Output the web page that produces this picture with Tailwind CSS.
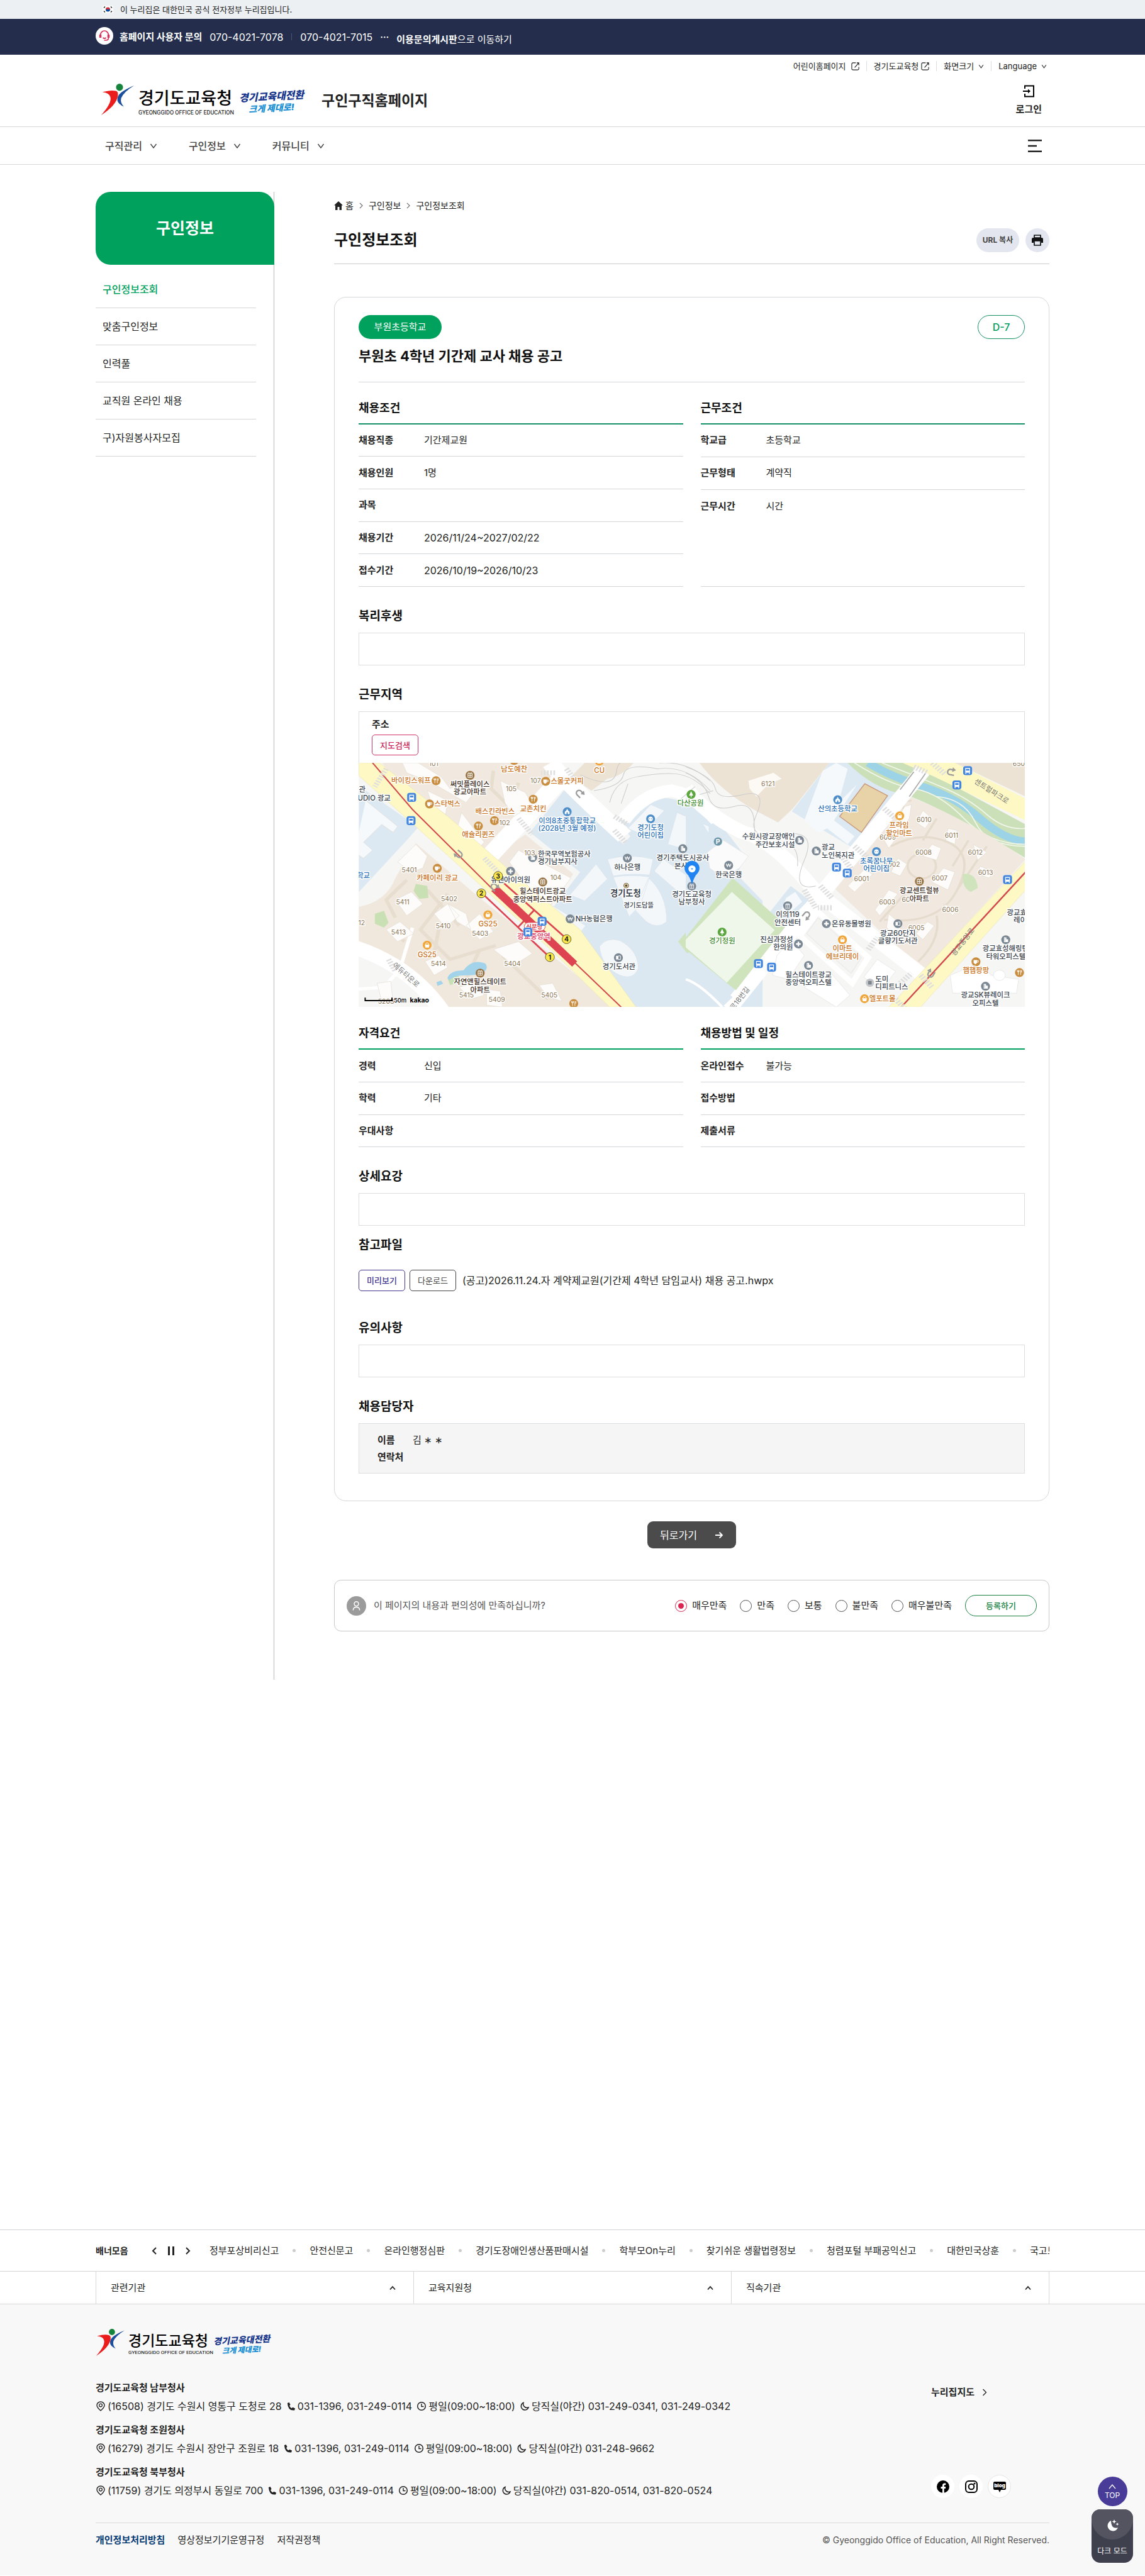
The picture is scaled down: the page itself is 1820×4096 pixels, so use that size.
<!DOCTYPE html>
<html lang="ko">
  <head>
    <meta charset="utf-8" />
    <meta name="viewport" content="width=device-width, initial-scale=1" />
    <title>구인정보조회 - 경기도교육청 구인구직홈페이지</title>
    <!-- Tailwind -->
    <script src="https://cdn.jsdelivr.net/npm/@tailwindcss/browser@4"></script>
  </head>
  <body class="relative bg-white text-[15px] leading-6 text-[#222] font-['Inter','Noto_Sans_CJK_KR',sans-serif]">
    <!-- Shared icons -->
    <svg class="absolute w-0 h-0" aria-hidden="true">
      <symbol id="i-down" viewBox="0 0 12 12"><path d="M1.5 3l4.5 6 4.5-6" fill="none" stroke="currentColor" stroke-width="1.4"/></symbol>
      <symbol id="i-up" viewBox="0 0 12 12"><path d="M2 8.500L6 4l4 4.500" fill="none" stroke="currentColor" stroke-width="1.800"/></symbol>
      <symbol id="i-right" viewBox="0 0 12 12"><path d="M3.500 1l5 5-5 5" fill="none" stroke="currentColor" stroke-width="1.300"/></symbol>
      <symbol id="i-ext" viewBox="0 0 14 14"><path d="M8 1H3Q1 1 1 3v8q0 2 2 2h8q2 0 2-2V8M9.500 1H13v4M12.800 1.200L6 9" fill="none" stroke="currentColor" stroke-width="1.200"/></symbol>
      <symbol id="i-pin" viewBox="0 0 16 16"><path d="M8 15Q2 10 2 6.500a6 5.500 0 0 1 12 0Q14 10 8 15z" fill="none" stroke="currentColor" stroke-width="1.400"/><circle cx="8" cy="6.600" r="2.400" fill="none" stroke="currentColor" stroke-width="1.300"/></symbol>
      <symbol id="i-tel" viewBox="0 0 16 16"><path d="M2 2l3-1 2 4-1.700 1.700q1.200 3 4 4.300L11 9.300l4 2-1 3Q3 16 2 2z" fill="currentColor"/></symbol>
      <symbol id="i-clock" viewBox="0 0 16 16"><circle cx="8" cy="8" r="6.300" fill="none" stroke="currentColor" stroke-width="1.500"/><path d="M8 4v4.500h3.500" fill="none" stroke="currentColor" stroke-width="1.400"/></symbol>
      <symbol id="i-moon" viewBox="0 0 16 16"><path d="M6 2.500A6 6 0 1 0 14 10 6 6 0 0 1 6 2.500z" fill="none" stroke="currentColor" stroke-width="1.500"/></symbol>
      <symbol id="i-symbol" viewBox="0 0 70 52">
        <ellipse cx="35" cy="6" rx="6.500" ry="6" fill="#16853c"/>
        <path d="M3 14q16-4 25-2 5 1 4 8Q29 36 1 52q20-20 17-30-2-7-15-8z" fill="#ea1c1c"/>
        <path d="M62 3Q42 14 38 24q-2 8 5 14-10-4-12-10-1-8 8-14T62 3z" fill="#1d4f9c"/>
      </symbol>
    </svg>

    <!-- Government notice -->
    <div class="h-[30px] bg-[#ecf0f3]">
      <div class="max-w-[1516px] mx-auto h-full flex items-center gap-[11px] pl-[11px] text-[13px]">
        <svg class="w-[17px] h-3" viewBox="0 0 17 12"><path d="M0 0h17v12H0z" fill="#fff"/><path d="M5 6a3.500 3.500 0 0 1 7 0z" fill="#cd2e3a"/><path d="M5 6a3.500 3.500 0 0 0 7 0z" fill="#0047a0"/><path d="M2 3.500l2-2M13 1.500l2 2M2 8.500l2 2M13 10.500l2-2" stroke="#222" stroke-width="1.500"/></svg>
        이 누리집은 대한민국 공식 전자정부 누리집입니다.
      </div>
    </div>

    <!-- Contact bar -->
    <div class="h-[57px] bg-[#242e4c] text-white">
      <div class="max-w-[1516px] mx-auto h-full flex items-center">
        <svg class="w-7 h-7 mr-[10px] mb-1" viewBox="0 0 28 28"><circle cx="14" cy="14" r="14" fill="#fff"/><g fill="none" stroke="#d8325c" stroke-width="1.700"><path d="M7.500 13a6.500 7 0 0 1 13 0v4q0 4-4 4h-3"/><path d="M7.500 12v5M20.500 12v5" stroke-width="3.500"/><path d="M11.500 17q2.500 2 5 0"/></g></svg>
        <strong class="mr-3">홈페이지 사용자 문의</strong>
        <span class="text-base">070-4021-7078</span>
        <span class="w-px h-[11px] bg-[#4b5470] mx-[13px]"></span>
        <span class="text-base">070-4021-7015</span>
        <span class="mx-3 text-sm font-bold">⋯</span>
        <a href="#" class="pt-2"><b>이용문의게시판</b>으로 이동하기</a>
      </div>
    </div>

    <!-- Header -->
    <header>
      <div class="border-b border-[#d8d8d8]">
        <div class="max-w-[1516px] mx-auto h-[114px] flex justify-between">
          <div class="flex items-center pt-7 pl-2">
            <a href="#" class="flex items-center">
              <svg class="w-[60px] h-[50px]" viewBox="0 0 70 52" preserveAspectRatio="none"><use href="#i-symbol"/></svg>
              <span class="pt-3 block text-black">
                <span class="block text-[27px] leading-[30px] font-medium">경기도교육청</span>
                <span class="block text-[9px] leading-[14px] whitespace-nowrap font-['Roboto']">GYEONGGIDO OFFICE OF EDUCATION</span>
              </span>
              <span class="ml-2 pt-2 block text-center italic font-black">
                <span class="block text-base leading-[19px] text-[#17358b] -rotate-3">경기교육대전환</span>
                <span class="block text-[14px] leading-[18px] text-[#1a8fd3] -rotate-3">크게 제대로!</span>
              </span>
            </a>
            <a href="#" class="ml-7 pt-1 text-[23px] font-bold">구인구직홈페이지</a>
          </div>
          <div class="flex flex-col items-end pt-2">
            <ul class="flex items-center h-5 pr-1 text-[13px]">
              <li class="flex items-center gap-2 pr-[11px] border-r border-[#ddd] leading-4"><a href="#">어린이홈페이지</a><svg class="w-[13px] h-[13px]"><use href="#i-ext"/></svg></li>
              <li class="flex items-center gap-1 px-[11px] border-r border-[#ddd] leading-4"><a href="#">경기도교육청</a><svg class="w-[13px] h-[13px]"><use href="#i-ext"/></svg></li>
              <li class="px-[11px] border-r border-[#ddd] leading-4"><button type="button" class="flex items-center gap-[7px]">화면크기<svg class="w-[9px] h-[9px]"><use href="#i-down"/></svg></button></li>
              <li class="pl-[11px] leading-4"><button type="button" class="flex items-center gap-[7px]">Language<svg class="w-[9px] h-[9px]"><use href="#i-down"/></svg></button></li>
            </ul>
            <a href="#" class="mt-5 mr-3 flex flex-col items-center gap-[9px]">
              <svg class="w-5 h-5" viewBox="0 0 20 20" fill="none" stroke="#000" stroke-width="2"><path d="M4 6V1.500h14v17H4V14"/><path d="M1 10h10"/><path d="M9 6.500l4 3.500-4 3.500z" fill="#000" stroke="none"/></svg>
              <span class="font-bold leading-5">로그인</span>
            </a>
          </div>
        </div>
      </div>
      <nav class="border-b border-[#d8d8d8]">
        <div class="max-w-[1516px] mx-auto h-[59px] flex items-center justify-between pl-[15px] pr-3">
          <ul class="flex gap-[50px] text-base font-medium text-[#444]">
            <li><button type="button" class="flex items-center gap-3">구직관리<svg class="w-3 h-3"><use href="#i-down"/></svg></button></li>
            <li><button type="button" class="flex items-center gap-3">구인정보<svg class="w-3 h-3"><use href="#i-down"/></svg></button></li>
            <li><button type="button" class="flex items-center gap-3">커뮤니티<svg class="w-3 h-3"><use href="#i-down"/></svg></button></li>
          </ul>
          <button type="button" aria-label="전체메뉴"><svg class="w-[22px] h-5" viewBox="0 0 22 20"><path d="M0 1.200h22M0 10h14M0 18.800h22" stroke="#222" stroke-width="2.400"/></svg></button>
        </div>
      </nav>
    </header>

    <!-- Content -->
    <div class="max-w-[1516px] mx-auto pt-[43px] flex gap-[95px]">
      <aside class="w-[284px] shrink-0 border-r border-[#bbb]">
        <h2 class="-mr-px h-[116px] flex items-center justify-center rounded-3xl rounded-br-none bg-[#00a15c] text-white text-[25px] font-bold">구인정보</h2>
        <ul class="pt-[10px] mr-7 text-base">
          <li class="h-[59px] flex items-center pl-[11px] border-b border-[#d5d5d5]"><a href="#" class="text-[#00a15c] font-medium">구인정보조회</a></li>
          <li class="h-[59px] flex items-center pl-[11px] border-b border-[#d5d5d5]"><a href="#">맞춤구인정보</a></li>
          <li class="h-[59px] flex items-center pl-[11px] border-b border-[#d5d5d5]"><a href="#">인력풀</a></li>
          <li class="h-[59px] flex items-center pl-[11px] border-b border-[#d5d5d5]"><a href="#">교직원 온라인 채용</a></li>
          <li class="h-[59px] flex items-center pl-[11px] border-b border-[#d5d5d5]"><a href="#">구)자원봉사자모집</a></li>
        </ul>
      </aside>

      <main class="flex-1 min-w-0 pt-[11px] pb-[77px]">
        <div class="flex items-center h-[22px] text-[14px]">
          <svg class="w-[14px] h-[14px] mr-1" viewBox="0 0 14 14"><path d="M7 0l7 6.500h-2V14H8.500V9h-3v5H2V6.500H0z" fill="#222"/></svg>
          <a href="#">홈</a>
          <svg class="w-[10px] h-[10px] mx-[7px] text-[#666]"><use href="#i-right"/></svg>
          <a href="#">구인정보</a>
          <svg class="w-[10px] h-[10px] mx-[7px] text-[#666]"><use href="#i-right"/></svg>
          <a href="#">구인정보조회</a>
        </div>
        <div class="mt-[25px] pb-[18px] flex items-center justify-between border-b border-[#ccc]">
          <h1 class="text-2xl leading-8 font-bold text-[#111]">구인정보조회</h1>
          <div class="flex gap-[10px]">
            <button type="button" class="w-[68px] h-[38px] rounded-full bg-[#e3e6ee] text-[12px] font-bold text-[#444]">URL 복사</button>
            <button type="button" aria-label="인쇄" class="w-[38px] h-[38px] rounded-full bg-[#e3e6ee] flex items-center justify-center"><svg class="w-[18px] h-[18px]" viewBox="0 0 18 18"><path d="M4 1h10v4H4z" fill="none" stroke="#111" stroke-width="1.700"/><path d="M2 5h14q2 0 2 2v6h-3v-3H3v3H0V7q0-2 2-2z" fill="#111"/><path d="M4 10h10v7H4z" fill="#e3e6ee" stroke="#111" stroke-width="1.700"/></svg></button>
          </div>
        </div>

        <article class="mt-[52px] px-[38px] pt-7 pb-[43px] border border-[#d5d8da] rounded-[19px]">
          <div class="flex justify-between">
            <span class="w-[132px] h-[38px] rounded-full bg-[#00a15c] text-white flex items-center justify-center">부원초등학교</span>
            <span class="w-[75px] h-[38px] rounded-full border border-[#15915f] text-[#009d5b] text-base font-medium flex items-center justify-center">D-7</span>
          </div>
          <h2 class="mt-3 pb-[26px] text-[22px] leading-[30px] font-bold text-[#111] border-b border-[#d5d8da]">부원초 4학년 기간제 교사 채용 공고</h2>

          <div class="grid grid-cols-2 gap-7 pt-[27px]">
            <section class="flex flex-col">
              <h3 class="pb-[10px] text-lg leading-7 font-bold text-[#111] border-b-2 border-[#17916a]">채용조건</h3>
              <table class="w-full h-[258px] text-left">
                <tr class="border-b border-[#d3d6d8]"><th class="w-[104px] font-bold">채용직종</th><td>기간제교원</td></tr>
                <tr class="border-b border-[#d3d6d8]"><th class="font-bold">채용인원</th><td>1명</td></tr>
                <tr class="border-b border-[#d3d6d8]"><th class="font-bold">과목</th><td></td></tr>
                <tr class="border-b border-[#d3d6d8]"><th class="font-bold">채용기간</th><td class="text-base">2026/11/24~2027/02/22</td></tr>
                <tr class="border-b border-[#d3d6d8]"><th class="font-bold">접수기간</th><td class="text-base">2026/10/19~2026/10/23</td></tr>
              </table>
            </section>
            <section class="flex flex-col border-b border-[#d3d6d8]">
              <h3 class="pb-[10px] text-lg leading-7 font-bold text-[#111] border-b-2 border-[#17916a]">근무조건</h3>
              <table class="w-full h-[155px] text-left">
                <tr class="border-b border-[#d3d6d8]"><th class="w-[104px] font-bold">학교급</th><td>초등학교</td></tr>
                <tr class="border-b border-[#d3d6d8]"><th class="font-bold">근무형태</th><td>계약직</td></tr>
                <tr><th class="font-bold">근무시간</th><td>시간</td></tr>
              </table>
            </section>
          </div>

          <h3 class="mt-8 mb-[11px] text-[19px] leading-[30px] font-bold text-[#111]">복리후생</h3>
          <div class="h-[52px] border border-[#dcdfe1]"></div>

          <h3 class="mt-8 mb-[11px] text-[19px] leading-[30px] font-bold text-[#111]">근무지역</h3>
          <div class="px-5 pt-2 pb-3 border border-b-0 border-[#dcdfe1]">
            <div class="font-bold">주소</div>
            <button type="button" class="mt-1 w-[74px] h-[33px] block rounded-[5px] border border-[#cc3064] text-[13px] text-[#cc1f58] font-medium">지도검색</button>
          </div>

          <!-- Map -->
          <svg class="block w-full" viewBox="0 0 1118 410" role="img" aria-label="근무지역 지도">
            <defs>
              <g id="m-bus"><rect x="-7.500" y="-7.500" width="15" height="15" rx="4" fill="#4286e0"/><path d="M-4-4.500h8v8h-8z" fill="#fff"/><path d="M-2.800-3h5.600v3h-5.600z" fill="#4286e0"/><path d="M-3 3.500v2M3 3.500v2" stroke="#fff" stroke-width="1.500"/></g>
              <g id="m-food"><circle r="7.500" fill="#c98d3f"/><path d="M-2-4v8M2-4v8M-3.500-4v2.500h3V-4M3.500-4v4" stroke="#fff" fill="none"/></g>
              <g id="m-cup"><circle r="7.500" fill="#c98d3f"/><path d="M-4-3h6v4q-1 3-3 3t-3-3z" fill="#fff"/><path d="M2-2h2v2.500H2" fill="none" stroke="#fff"/></g>
              <g id="m-mart"><circle r="7.500" fill="#f0a63a"/><path d="M-4-1h8l-1 5h-6z" fill="#fff"/><path d="M-2.500-1a2.500 3 0 0 1 5 0" fill="none" stroke="#fff"/></g>
              <g id="m-apt"><circle r="7.500" fill="#987647"/><path d="M-3.500-3.500h7v7h-7zM0-3.500v7M-3.500 0h7M-2-5v2M2-5v2" fill="none" stroke="#fff"/></g>
              <g id="m-bld"><circle r="7.500" fill="#7b8894"/><path d="M-3-4h4v8h-4zM1-1h3v5H1z" fill="#fff"/><path d="M-1.500-2.500v5" stroke="#7b8894" stroke-dasharray="1 1"/></g>
              <g id="m-won"><circle r="7.500" fill="#7b8894"/><path d="M-4-3l2 6 2-6 2 6 2-6M-4.500-.5h9" fill="none" stroke="#fff"/></g>
              <g id="m-gov"><circle r="7.500" fill="#7b8894"/><path d="M-4 4h8M-4-2h8M-3-2v5M0-2v5M3-2v5M-3-3.500h6" stroke="#fff" fill="none"/></g>
              <g id="m-book"><circle r="7.500" fill="#7b8894"/><path d="M-4-3h4v6h-4z" fill="#fff"/><path d="M0-3h3.500v6H0" fill="none" stroke="#fff"/></g>
              <g id="m-med"><circle r="7.500" fill="#7b8894"/><path d="M0-4v8M-4 0h8" stroke="#fff" stroke-width="2.500"/></g>
              <g id="m-sch"><circle r="7.500" fill="#4f8fc9"/><path d="M0-5l1.500 3L4 0v4H1V1h-2v3h-3V0l2.500-2z" fill="#fff"/></g>
              <g id="m-kid"><circle r="7.500" fill="#4f8fc9"/><circle r="3.800" fill="#fff"/><path d="M-1.500 0h.1M1.500 0h.1" stroke="#4f8fc9" stroke-width="1.500" stroke-linecap="round"/></g>
              <g id="m-tree"><circle r="7.500" fill="#5ba63f"/><path d="M0-5.500L3.500 2h-7zM-.7 2h1.400v3h-1.400z" fill="#fff"/></g>
              <g id="m-uturn"><path d="M-5 6V-1a4.500 4.500 0 0 1 9 0v4" fill="none" stroke="#9b9b9b" stroke-width="2.500"/><path d="M0 2h8L4 8z" fill="#9b9b9b"/></g>
            </defs>
            <path d="M0 0h1118v410H0z" fill="#f6f6f5"/>
            <!-- West side -->
            <g transform="matrix(.3827 0 0 .3333 -11 -20)">
              <path d="M130 60H870l20 70L580 545 340 300 180 130z" fill="#f1e9df"/>
              <path d="M960 130L1020 60h215Q1180 130 1120 140L1050 200z" fill="#ece3d5"/>
              <path d="M30 175L290 385 240 450 30 710z" fill="#dce9f2"/>
              <path d="M932 195L1190 470l30-40-50-75q60-115 190-120 120 10 240 110l120 180-30 100 110 130V1290H1245L860 820l140-210L780 410z" fill="#dce8f1"/>
              <path d="M280 465L560 740l600 550H410Q300 1080 30 965V785Q150 760 190 640z" fill="#f1e8dd"/>
              <path d="M760 420L970 620 860 800 580 560z" fill="#f1e9df"/>
              <path d="M1160 1290L900 1030 1150 1230z" fill="#eee"/>
              <!-- Park footpaths -->
              <g fill="none" stroke="#ccc" stroke-width="3"><path d="M1000 120q150 80 160-20t190-40q120-10 220 90M1060 200q120-20 130-80t150-30q130-20 230 110M1130 260q20-110 120-130t170-15q80 10 150 100M1180 265l30-100"/></g>
              <!-- Cross streets -->
              <g fill="none" stroke="#fff"><path d="M1195 430Q930 150 870 60" stroke-width="78"/><path d="M925 130L570 570" stroke-width="82"/><path d="M1190 350Q1280 210 1400 200q100 20 200 150" stroke-width="62"/><path d="M0 985Q260 1080 400 1320" stroke-width="72"/><path d="M265 890l-55 210-70 90-120 10" stroke-width="16"/></g>
              <g fill="none" stroke="#e8decf" stroke-width="16"><path d="M240 650l-90 100 40 90M420 720L300 900l130 150 200-70M170 900l60 60M330 700l140 180M560 1000L480 1200M380 900l-20 120M660 1030L860 1250M620 100l-10 90 80 90 40-120"/></g>
              <!-- Greens and pond -->
              <path d="M280 670l50 10 5 60-40 5-25-40zM100 820l40-15 20 60-20 25-40-20zM420 1150l40-30 20 40-50 20z" fill="#c9dfb4"/>
              <path d="M418 1145q10-40 70-40 40-60 95-35 20 20-10 50-30 10-70 10-60 0-75 25zM370 1165l20-8 10 15-25 12z" fill="#a3d3ea"/>
              <!-- Buildings -->
              <g fill="#fdfcfa" stroke="#e2dbd2" stroke-width="2">
                <path d="M220 60l70 0 100 70 40 60 80-50 60 20-70 100-150-100-110-50zM480 310l100 150-40 45-80-110zM650 150l110 60 30 60-80 60-40-70zM330 200l90 50-10 70-60-50z"/>
                <path d="M200 560l80-90 50 60-20 60-50 20zM190 750l70-40 50 60-70 60zM360 820l60-50 50 60-60 60zM150 900l60-40 60 60-70 40zM500 880l60-60 60 90-60 40zM420 770l80 50 20 80-60-40zM320 1060l60-30 40 60-60 40zM620 1000l110-40 60 60-80 60zM820 1180l60-10 40 90-60-20zM470 1190l60-20 50 60-60 20zM590 1200l60 10 10 80-70-10zM110 1170l60-10 10 110-50-10z"/>
                <path d="M690 560l40-60 230 140-100 150-70-70z"/>
                <path d="M60 250l140 130-20 30-50-40-80 90 40 40-40 40-40-30" fill="#f5f9fc"/>
              </g>
              <g fill="#f3f7fa" stroke="#d6e2ea" stroke-width="2"><path d="M1120 545q100-30 200 0l-15 80q-80-10-160 5zM1145 635q80-15 160 0l-40 140 -50 60zM1300 640q80 80 80 220-40 40-90 0L1240 800zM1070 570l50 75-100 110-65-30zM1085 985q30-50 90-30 80 50 80 140-20 60-80 35-80-40-90-145zM1425 310l140 70v60l-60 70-120-40zM1310 270l60 30-100 120-60-30zM880 780l145 100-50 70-125-100z"/><path d="M1365 545l200 160-40 100-200-200z"/></g>
              <path d="M1660 640L1430 960l40 60 200-230z" fill="#cfe3bd"/>
              <!-- Main road -->
              <path d="M30 60h90L420 330l280 280 300 290 245 390h-115L880 1010 500 610 250 350 30 125z" fill="#fdf8c4" stroke="#ece5b5" stroke-width="2"/>
              <path d="M90 60L265 295 620 700l360 370 200 220" fill="none" stroke="#d3484f" stroke-width="6"/>
              <path d="M610 705l32-22 345 377-22 26z" fill="#dd4350"/>
              <path d="M575 722L860 1032M655 655L935 940M800 800l-70 85" fill="none" stroke="#dd4350" stroke-width="8"/>
              <g stroke="#dedede" stroke-width="24" stroke-dasharray="7 7" fill="none"><path d="M580 540l60 70M730 340l60 80M890 110l-60 0M940 90l40 60M150 90l-50 90M1150 330l60 40M1150 400l50 60M160 1050l30 60"/></g>
            </g>
            <!-- East side -->
            <g transform="matrix(.3827 0 0 .3333 549 -20)">
              <path d="M150 60H630L470 290l-65 70-100-60Q150 200 60 60z" fill="#ece3d5"/>
              <path d="M275 150l110-40 35 30-60 30-50 60-30-40z" fill="#fdfaf5"/>
              <path d="M630 60h90l240 140-225 290-270-185z" fill="#dce9f2"/>
              <path d="M600 100l60-40 50 30-40 170 80-90-100 180 90 80-30 40-90-80-40 20-60-60z" fill="#f5f9fc"/>
              <path d="M785 165l100 60-115 185-95-80z" fill="#e8d3a8" stroke="#c8977a" stroke-width="4"/>
              <path d="M710 60h280l500 310v170Q1100 270 960 220 820 190 710 60z" fill="#cbe0b8"/>
              <path d="M800 60Q900 130 1040 180t250 160 200 115" fill="none" stroke="#9dd3e6" stroke-width="38"/>
              <g fill="none" stroke="#f2f7ec" stroke-width="5"><path d="M740 60q150 110 260 130t220 150 270 130M860 60q180 80 280 130t180 130 170 70M1100 230q120 10 170 130t220 120"/></g>
              <path d="M950 60H1180L1490 240V350L1090 130z" fill="#fdf8c4"/>
              <path d="M1180 60h310v170z" fill="#ece3d5"/>
              <path d="M970 225Q1230 340 1490 545L1040 1110 655 695z" fill="#f1e9df"/>
              <g fill="none" stroke="#e6dccd" stroke-width="10"><circle cx="1035" cy="580" r="62"/><path d="M900 480q130-80 250-20t40 240-320 150M1100 340l-60 110M1240 450l-70 130M1320 480L1190 700M1100 830q20 120-80 230M960 720l-110 140M990 250q-60 0-20 80"/></g>
              <path d="M1215 620q60-10 65 70l-30 20q-40-20-35-90z" fill="#cfe3bd"/>
              <g fill="#fdfcfa" stroke="#e0d8cd" stroke-width="2"><path d="M1040 300l40 40-30 50-40-30zM1150 390l40 10-10 70-40-20zM1080 470l40 20-20 60-60-20zM1260 470l60 40-40 40zM1290 580l60 30-20 30-50-20zM1130 590l50 20-30 90-70-40zM930 540l40 30-30 60-40-20zM780 600l40 20-80 90-30-30zM890 700l40 20-80 110-20-30zM1130 770l60 30-20 30zM1060 860l30 20-50 70-30-30zM890 820l60 60-30 50-40-40zM960 280l30-10-10 70-50 90-40 60-20-40z"/></g>
              <!-- Secondary streets -->
              <g fill="none" stroke="#fff"><path d="M0 190Q100 330 250 410q130 30 320 300l480 430" stroke-width="68"/><path d="M1040 100L580 740 190 1300" stroke-width="70"/></g>
              <path d="M500 930l80-120 220 230-70 130z" fill="none" stroke="#fff" stroke-width="26"/>
              <path d="M530 920l50-80 190 200-45 80z" fill="#f4f4f3" stroke="#ddd" stroke-width="2"/>
              <g fill="none" stroke="#ccc" stroke-width="3"><path d="M0 80q120 50 130 110t120 30 60 100 110 100 100 130 50 130M0 110q80 40 100 120t110 50 90 90 100 100 90 110M40 180l-60 60M60 220l60-20"/></g>
              <path d="M0 230l110 200-40 100 140 130L0 950z" fill="#dce8f1"/>
              <path d="M460 680l80 70-110 130-60-70z" fill="#dce8f1"/>
              <path d="M440 740l40-30 30 50-60 60-30-20z" fill="#f5f9fc"/>
              <path d="M205 640l235 240-220 325-45-40L0 1000V940z" fill="#cfe3bd"/>
              <path d="M202 710l188 192-210 265L0 990v-40z" fill="#eff7ea"/>
              <path d="M0 1020l205 220-45 50H0z" fill="#dce8f1"/>
              <path d="M0 1150q60 20 160 140" fill="none" stroke="#fff" stroke-width="12"/>
              <path d="M95 510l70-60 110 80-40 60-70 50-60-50z" fill="#fbfbfb" stroke="#e3e3e3" stroke-width="2"/>
              <path d="M1490 555V700L1030 1290H890z" fill="#fdf8c4" stroke="#ece5b5" stroke-width="2"/>
              <path d="M1490 610L945 1290" stroke="#d3484f" stroke-width="7"/>
              <g fill="#fff" stroke="#e0e0e0" stroke-width="2"><path d="M1160 1130l120-60 60 60 120 20-10 70h-280zM400 1030l60-80 60 80-70 120-70-20zM520 1190l110-80 90 120-60 60zM840 1050l80 60-60 90-80-60z"/><circle cx="1375" cy="1130" r="26"/></g>
              <g stroke="#dedede" stroke-width="26" stroke-dasharray="7 7" fill="none"><path d="M740 480l60 60M870 290l50 50M520 700l50 90M590 680l50 60M640 790l-60 0M690 540l40 60M1000 80l60 30M1080 60l60 60M800 1000l40-60M920 1250l50 60M1030 1130l50 60M940 1170l50-50"/></g>
              <g stroke="#aaa" stroke-width="5"><path d="M940 195L1000 105M980 230l70-115"/></g>
            </g>
            <g>
              <use href="#m-bus" x="89" y="58"/><use href="#m-bus" x="88" y="97"/><use href="#m-bus" x="1022" y="13"/><use href="#m-bus" x="1004" y="37"/><use href="#m-bus" x="802" y="175"/><use href="#m-bus" x="820" y="185"/><use href="#m-bus" x="1089" y="196"/><use href="#m-bus" x="671" y="337"/><use href="#m-bus" x="693" y="343"/>
              <use href="#m-food" x="130" y="30"/><use href="#m-food" x="261" y="-4"/><use href="#m-food" x="201" y="106"/><use href="#m-food" x="228" y="97"/><use href="#m-food" x="293" y="61"/><use href="#m-food" x="361" y="404"/><use href="#m-food" x="1109" y="352"/>
              <use href="#m-cup" x="314" y="31"/><use href="#m-cup" x="119" y="69"/><use href="#m-cup" x="132" y="177"/><use href="#m-cup" x="1036" y="334"/>
              <use href="#m-mart" x="404" y="-3"/><use href="#m-mart" x="217" y="255"/><use href="#m-mart" x="115" y="306"/><use href="#m-mart" x="908" y="89"/><use href="#m-mart" x="812" y="297"/><use href="#m-mart" x="849" y="396"/>
              <use href="#m-apt" x="187" y="21"/><use href="#m-apt" x="309" y="200"/><use href="#m-apt" x="204" y="353"/><use href="#m-apt" x="941" y="199"/>
              <use href="#m-bld" x="292" y="159"/><use href="#m-bld" x="544" y="144"/><use href="#m-bld" x="740" y="130"/><use href="#m-bld" x="768" y="148"/><use href="#m-bld" x="1086" y="297"/><use href="#m-bld" x="755" y="340"/><use href="#m-bld" x="1052" y="375"/>
              <use href="#m-won" x="451" y="160"/><use href="#m-won" x="355" y="262"/><use href="#m-won" x="621" y="172"/>
              <use href="#m-gov" x="559" y="207"/><use href="#m-gov" x="720" y="240"/>
              <use href="#m-book" x="436" y="327"/><use href="#m-book" x="905" y="270"/>
              <use href="#m-med" x="255" y="182"/><use href="#m-med" x="785" y="270"/><use href="#m-med" x="738" y="304"/>
              <use href="#m-sch" x="350" y="82"/><use href="#m-sch" x="804" y="62"/><use href="#m-kid" x="490" y="94"/><use href="#m-kid" x="869" y="149"/>
              <use href="#m-tree" x="558" y="53"/><use href="#m-tree" x="610" y="284"/>
              <use href="#m-uturn" transform="translate(371 51) rotate(-45)"/><use href="#m-uturn" transform="translate(168 154) rotate(130)"/><use href="#m-uturn" transform="translate(228 208) rotate(-45)"/><use href="#m-uturn" transform="translate(994 15) rotate(-80)"/><use href="#m-uturn" transform="translate(752 256) rotate(40)"/><use href="#m-uturn" transform="translate(960 354) rotate(210)"/>
              <circle cx="603" cy="132" r="7" fill="#6c95a8"/><circle cx="858" cy="369" r="7" fill="#c3c7cb"/><path d="M855 366h6v6h-6z" fill="#7d848b"/>
              <circle cx="449" cy="206" r="4" fill="#f9e9c0" stroke="#5c4a2d"/><circle cx="449" cy="206" r="2" fill="#5c4a2d"/>
            </g>
            <g fill="#8a7350" class="text-[11px]" text-anchor="middle" stroke="#fff" stroke-width="3" stroke-linejoin="round" paint-order="stroke">
              <text x="297" y="34">107</text><text x="256" y="47">105</text><text x="245" y="104">102</text><text x="287" y="155">103</text><text x="331" y="196">104</text><text x="85" y="184">5401</text><text x="74" y="238">5411</text><text x="152" y="232">5402</text><text x="142" y="278">5410</text><text x="67" y="288">5413</text><text x="204" y="290">5403</text><text x="5" y="272">12</text><text x="134" y="341">5414</text><text x="258" y="341">5404</text><text x="181" y="394">5415</text><text x="232" y="401">5409</text><text x="320" y="394">5405</text>
              <text x="687" y="39">6121</text><text x="949" y="99">6010</text><text x="995" y="126">6011</text><text x="888" y="129">6009</text><text x="948" y="154">6008</text><text x="1035" y="154">6012</text><text x="1052" y="188">6013</text><text x="975" y="197">6007</text><text x="844" y="199">6001</text><text x="895" y="174">6002</text><text x="887" y="238">6003</text><text x="993" y="250">6006</text><text x="936" y="281">6005</text><text x="922" y="233">600</text><text x="1108" y="5">650</text><text x="46" y="404">5203</text><text x="126" y="5">101</text>
            </g>
            <g class="text-[12px] font-medium" text-anchor="middle" stroke="#fff" stroke-width="3" stroke-linejoin="round" paint-order="stroke">
              <g fill="#c9721c">
                <text x="88" y="34">바이킹스워프</text><text x="261" y="15">남도예찬</text><text x="350" y="35">스몰굿커피</text><text x="404" y="17">CU</text><text x="293" y="81">교촌치킨</text><text x="229" y="85">배스킨라빈스</text><text x="149" y="73">스타벅스</text><text x="201" y="125">애슐리퀸즈</text><text x="132" y="197">카페이리 광교</text><text x="217" y="274">GS25</text><text x="115" y="326">GS25</text><text x="907" y="109">프라임</text><text x="907" y="122">할인마트</text><text x="812" y="316">이마트</text><text x="812" y="329">에브리데이</text><text x="1036" y="353">햄햄팡팡</text><text x="879" y="400">엘포트몰</text>
              </g>
              <g fill="#3b2a20"><text x="187" y="40">써밋플레이스</text><text x="187" y="53">광교아파트</text><text x="309" y="220">힐스테이트광교</text><text x="309" y="233">중앙역퍼스트아파트</text><text x="204" y="372">자연앤힐스테이트</text><text x="204" y="385">아파트</text><text x="941" y="219">광교센트럴뷰</text><text x="941" y="232">아파트</text></g>
              <g fill="#2a6fb5"><text x="350" y="101">이의8초중통합학교</text><text x="350" y="114">(2028년 3월 예정)</text><text x="490" y="113">경기도청</text><text x="490" y="126">어린이집</text><text x="8" y="193">학교</text><text x="804" y="81">산의초등학교</text><text x="869" y="169">초록꿈나무</text><text x="869" y="182">어린이집</text></g>
              <g fill="#3f8a2c"><text x="557" y="72">다산공원</text><text x="610" y="303">경기정원</text></g>
              <g fill="#39434e">
                <text x="6" y="49">관</text><text x="26" y="63">UDIO 광교</text><text x="451" y="179">하나은행</text><text x="544" y="164">경기주택도시공사</text><text x="541" y="177">본사</text><text x="559" y="225">경기도교육청</text><text x="559" y="238">남부청사</text><text x="470" y="243" class="text-[11px]">경기도담뜰</text><text x="255" y="201">유앤아이의원</text><text x="395" y="266">NH농협은행</text><text x="437" y="346">경기도서관</text><text x="621" y="192">한국은행</text><text x="720" y="259">이의119</text><text x="720" y="272">안전센터</text><text x="827" y="274">온유동물병원</text><text x="905" y="290">광교60단지</text><text x="905" y="303">글향기도서관</text><text x="755" y="360">힐스테이트광교</text><text x="755" y="373">중앙역오피스텔</text><text x="1052" y="394">광교SK뷰레이크</text><text x="1052" y="407">오피스텔</text>
                <text x="448" y="224" class="text-[14px] font-bold">경기도청</text>
                <g text-anchor="start"><text x="301" y="157">한국무역보험공사</text><text x="301" y="170">경기남부지사</text><text x="777" y="146">광교</text><text x="777" y="159">노인복지관</text><text x="1088" y="255">광교효성</text><text x="1099" y="268">레이크</text><text x="1047" y="316">광교효성해링턴</text><text x="1053" y="329">타워오피스텔</text><text x="867" y="367">도미</text><text x="867" y="380">디피트니스</text></g>
                <g text-anchor="end"><text x="732" y="128">수원시광교장애인</text><text x="732" y="141">주간보호시설</text><text x="729" y="301">진심과정성</text><text x="729" y="314">한의원</text></g>
              </g>
            </g>
            <g class="text-[12px]" text-anchor="middle" fill="#777"><text transform="translate(77 359) rotate(42)">에듀타운로</text><text transform="translate(1060 51) rotate(33)">센트럴파크로</text><text transform="translate(1017 303) rotate(-52)">광교중앙로</text><text transform="translate(643 398) rotate(-52)">로18번길</text></g>
            <text x="603" y="136" text-anchor="middle" fill="#fff" class="text-[11px] font-bold">P</text>
            <!-- Station -->
            <g text-anchor="middle" class="text-[11px] font-bold">
              <rect x="278" y="268" width="35" height="14" rx="7" fill="#fff" stroke="#dd4350"/><text x="295" y="279" fill="#dd4350" class="text-[10px]">신분당</text>
              <text x="294" y="296" fill="#e05577" stroke="#fff" stroke-width="3" paint-order="stroke" class="text-[12px]">광교중앙역</text>
              <use href="#m-bus" x="308" y="266"/><use href="#m-bus" x="284" y="284"/>
              <g fill="#fbe94b" stroke="#5d5420"><circle cx="234" cy="190" r="7.500"/><circle cx="206" cy="219" r="7.500"/><circle cx="349" cy="296" r="7.500"/><circle cx="321" cy="326" r="7.500"/></g>
              <g fill="#222"><text x="234" y="194">3</text><text x="206" y="223">2</text><text x="349" y="300">4</text><text x="321" y="330">1</text></g>
            </g>
            <path d="M559.500 205Q557 192 550 185a12.500 12.500 0 1 1 19 0q-7 7-9.500 20z" fill="#1f83f2"/><circle cx="559.500" cy="178" r="6" fill="#fff"/><path d="M557.500 177h4l-2 2.500z" fill="#1f83f2"/>
            <path d="M11 394v5h45v-5" fill="none" stroke="#000" stroke-width="2"/>
            <g fill="#000"><text x="59" y="402" class="text-[10px] font-medium">50m</text><text x="86" y="402" class="text-[11px] font-bold">kakao</text></g>
          </svg>

          <div class="grid grid-cols-2 gap-7 pt-7">
            <section>
              <h3 class="pb-[10px] text-lg leading-7 font-bold text-[#111] border-b-2 border-[#00a160]">자격요건</h3>
              <table class="w-full h-[155px] text-left">
                <tr class="border-b border-[#d3d6d8]"><th class="w-[104px] font-bold">경력</th><td>신입</td></tr>
                <tr class="border-b border-[#d3d6d8]"><th class="font-bold">학력</th><td>기타</td></tr>
                <tr class="border-b border-[#d3d6d8]"><th class="font-bold">우대사항</th><td></td></tr>
              </table>
            </section>
            <section>
              <h3 class="pb-[10px] text-lg leading-7 font-bold text-[#111] border-b-2 border-[#00a160]">채용방법 및 일정</h3>
              <table class="w-full h-[155px] text-left">
                <tr class="border-b border-[#d3d6d8]"><th class="w-[104px] font-bold">온라인접수</th><td>불가능</td></tr>
                <tr class="border-b border-[#d3d6d8]"><th class="font-bold">접수방법</th><td></td></tr>
                <tr class="border-b border-[#d3d6d8]"><th class="font-bold">제출서류</th><td></td></tr>
              </table>
            </section>
          </div>

          <h3 class="mt-8 mb-[11px] text-[19px] leading-[30px] font-bold text-[#111]">상세요강</h3>
          <div class="h-[52px] border border-[#dcdfe1]"></div>

          <h3 class="mt-4 text-[19px] leading-[30px] font-bold text-[#111]">참고파일</h3>
          <div class="mt-6 flex items-center">
            <button type="button" class="w-[74px] h-[34px] rounded-[5px] border border-[#3f358c] text-[13px] text-[#3f358c] font-medium">미리보기</button>
            <button type="button" class="ml-[7px] w-[74px] h-[34px] rounded-[5px] border border-[#444] text-[13px] text-[#444]">다운로드</button>
            <span class="ml-[10px] text-base">(공고)2026.11.24.자 계약제교원(기간제 4학년 담임교사) 채용 공고.hwpx</span>
          </div>

          <h3 class="mt-11 mb-[11px] text-[19px] leading-[30px] font-bold text-[#111]">유의사항</h3>
          <div class="h-[52px] border border-[#dcdfe1]"></div>

          <h3 class="mt-8 mb-[11px] text-[19px] leading-[30px] font-bold text-[#111]">채용담당자</h3>
          <dl class="grid grid-cols-[56px_1fr] px-[29px] py-3 border border-[#dcdfe1] bg-[#f5f5f5] leading-[27px]">
            <dt class="font-bold">이름</dt><dd>김 ∗ ∗</dd>
            <dt class="font-bold">연락처</dt><dd></dd>
          </dl>
        </article>

        <a href="#" class="mt-8 mx-auto w-[141px] h-[43px] px-5 flex items-center justify-between rounded-[9px] bg-[#4b4b4b] text-white text-base">뒤로가기<svg class="w-[14px] h-[14px]" viewBox="0 0 14 14"><path d="M1 7h11M7.500 2.500L12 7l-4.500 4.500" fill="none" stroke="#fff" stroke-width="1.800"/></svg></a>

        <!-- Satisfaction survey -->
        <form class="mt-[50px] h-[82px] px-[19px] flex items-center justify-between rounded-[11px] border border-[#c8c8c8]">
          <div class="flex items-center gap-3 text-[#555]">
            <svg class="w-[31px] h-[31px]" viewBox="0 0 33 33"><circle cx="16.500" cy="16.500" r="16.500" fill="#9b9b9b"/><circle cx="16.500" cy="13" r="3.700" fill="none" stroke="#fff" stroke-width="1.600"/><path d="M11 24q0-5.500 5.500-5.500T22 24" fill="none" stroke="#fff" stroke-width="1.600"/></svg>
            이 페이지의 내용과 편의성에 만족하십니까?
          </div>
          <div class="flex items-center gap-[21px]">
            <label class="flex items-center gap-2"><input type="radio" name="sat" checked class="appearance-none w-[19px] h-[19px] rounded-full border border-[#555] checked:border-[#dc2450] checked:bg-[#dc2450] checked:bg-clip-content checked:p-1" />매우만족</label>
            <label class="flex items-center gap-2"><input type="radio" name="sat" class="appearance-none w-[19px] h-[19px] rounded-full border border-[#555]" />만족</label>
            <label class="flex items-center gap-2"><input type="radio" name="sat" class="appearance-none w-[19px] h-[19px] rounded-full border border-[#555]" />보통</label>
            <label class="flex items-center gap-2"><input type="radio" name="sat" class="appearance-none w-[19px] h-[19px] rounded-full border border-[#555]" />불만족</label>
            <label class="flex items-center gap-2"><input type="radio" name="sat" class="appearance-none w-[19px] h-[19px] rounded-full border border-[#555]" />매우불만족</label>
            <button type="submit" class="w-[114px] h-[34px] rounded-full border border-[#17803f] text-[13px] text-[#17803f] font-medium">등록하기</button>
          </div>
        </form>
      </main>
    </div>

    <!-- Footer -->
    <footer class="mt-[874px]">
      <div class="border-t border-[#d0d3d8]">
        <div class="max-w-[1516px] mx-auto h-[65px] flex items-center overflow-hidden whitespace-nowrap">
          <strong class="text-[14px] w-[88px] shrink-0">배너모음</strong>
          <div class="flex items-center gap-4 w-[93px] shrink-0">
            <button type="button" aria-label="이전"><svg class="block w-[10px] h-3" viewBox="0 0 10 12"><path d="M8 1L3 6l5 5" fill="none" stroke="#222" stroke-width="2"/></svg></button>
            <button type="button" aria-label="정지"><svg class="block w-3 h-[14px]" viewBox="0 0 12 14"><path d="M2.500 0v14M9.500 0v14" stroke="#222" stroke-width="3"/></svg></button>
            <button type="button" aria-label="다음"><svg class="block w-[10px] h-3" viewBox="0 0 10 12"><path d="M2 1l5 5-5 5" fill="none" stroke="#222" stroke-width="2"/></svg></button>
          </div>
          <ul class="flex items-center gap-[22px] min-w-0 overflow-hidden">
            <li><a href="#">정부포상비리신고</a></li><li class="w-[5px] h-[5px] rounded-full bg-[#ccc] shrink-0"></li>
            <li><a href="#">안전신문고</a></li><li class="w-[5px] h-[5px] rounded-full bg-[#ccc] shrink-0"></li>
            <li><a href="#">온라인행정심판</a></li><li class="w-[5px] h-[5px] rounded-full bg-[#ccc] shrink-0"></li>
            <li><a href="#">경기도장애인생산품판매시설</a></li><li class="w-[5px] h-[5px] rounded-full bg-[#ccc] shrink-0"></li>
            <li><a href="#">학부모On누리</a></li><li class="w-[5px] h-[5px] rounded-full bg-[#ccc] shrink-0"></li>
            <li><a href="#">찾기쉬운 생활법령정보</a></li><li class="w-[5px] h-[5px] rounded-full bg-[#ccc] shrink-0"></li>
            <li><a href="#">청렴포털 부패공익신고</a></li><li class="w-[5px] h-[5px] rounded-full bg-[#ccc] shrink-0"></li>
            <li><a href="#">대한민국상훈</a></li><li class="w-[5px] h-[5px] rounded-full bg-[#ccc] shrink-0"></li>
            <li><a href="#">국고보조금</a></li>
          </ul>
        </div>
      </div>
      <div class="border-y border-[#d8d8d8]">
        <div class="max-w-[1516px] mx-auto h-[51px] grid grid-cols-3 border-l border-[#d8d8d8]">
          <button type="button" class="px-[23px] flex items-center justify-between border-r border-[#d8d8d8]">관련기관<svg class="w-3 h-3 mr-1"><use href="#i-up"/></svg></button>
          <button type="button" class="px-[23px] flex items-center justify-between border-r border-[#d8d8d8]">교육지원청<svg class="w-3 h-3 mr-1"><use href="#i-up"/></svg></button>
          <button type="button" class="px-[23px] flex items-center justify-between border-r border-[#d8d8d8]">직속기관<svg class="w-3 h-3 mr-1"><use href="#i-up"/></svg></button>
        </div>
      </div>
      <div class="bg-[#f8f8f8]">
        <div class="max-w-[1516px] mx-auto pt-[39px] pb-11">
          <a href="#" class="h-[42px] flex items-center">
            <svg class="w-[52px] h-[43px]" viewBox="0 0 70 52" preserveAspectRatio="none"><use href="#i-symbol"/></svg>
            <span class="pt-2 block text-black">
              <span class="block text-[23px] leading-[26px] font-medium">경기도교육청</span>
              <span class="block text-[8px] leading-3 whitespace-nowrap font-['Roboto']">GYEONGGIDO OFFICE OF EDUCATION</span>
            </span>
            <span class="pt-2 block text-center italic font-black">
              <span class="block text-[14px] leading-[17px] text-[#17358b] -rotate-3">경기교육대전환</span>
              <span class="block text-[12px] leading-[15px] text-[#1a8fd3] -rotate-3">크게 제대로!</span>
            </span>
          </a>
          <div class="mt-10 flex justify-between">
            <div class="flex flex-col gap-[14px]">
              <div>
                <strong class="block mb-[5px]">경기도교육청 남부청사</strong>
                <p class="flex items-center gap-[3px] text-base leading-6"><svg class="w-4 h-4"><use href="#i-pin"/></svg>(16508) 경기도 수원시 영통구 도청로 28 <svg class="w-[15px] h-[15px] ml-1"><use href="#i-tel"/></svg>031-1396, 031-249-0114 <svg class="w-4 h-4 ml-1"><use href="#i-clock"/></svg>평일(09:00~18:00) <svg class="w-4 h-4 ml-1"><use href="#i-moon"/></svg>당직실(야간) 031-249-0341, 031-249-0342</p>
              </div>
              <div>
                <strong class="block mb-[5px]">경기도교육청 조원청사</strong>
                <p class="flex items-center gap-[3px] text-base leading-6"><svg class="w-4 h-4"><use href="#i-pin"/></svg>(16279) 경기도 수원시 장안구 조원로 18 <svg class="w-[15px] h-[15px] ml-1"><use href="#i-tel"/></svg>031-1396, 031-249-0114 <svg class="w-4 h-4 ml-1"><use href="#i-clock"/></svg>평일(09:00~18:00) <svg class="w-4 h-4 ml-1"><use href="#i-moon"/></svg>당직실(야간) 031-248-9662</p>
              </div>
              <div>
                <strong class="block mb-[5px]">경기도교육청 북부청사</strong>
                <p class="flex items-center gap-[3px] text-base leading-6"><svg class="w-4 h-4"><use href="#i-pin"/></svg>(11759) 경기도 의정부시 동일로 700 <svg class="w-[15px] h-[15px] ml-1"><use href="#i-tel"/></svg>031-1396, 031-249-0114 <svg class="w-4 h-4 ml-1"><use href="#i-clock"/></svg>평일(09:00~18:00) <svg class="w-4 h-4 ml-1"><use href="#i-moon"/></svg>당직실(야간) 031-820-0514, 031-820-0524</p>
              </div>
            </div>
            <div class="w-[188px] pt-[7px] flex flex-col justify-between">
              <a href="#" class="flex items-center gap-[10px] font-bold">누리집지도<svg class="w-3 h-3"><use href="#i-right"/></svg></a>
              <div class="flex gap-2">
                <a href="#" aria-label="페이스북" class="w-[37px] h-[37px] rounded-full bg-white flex items-center justify-center"><svg class="w-5 h-5" viewBox="0 0 20 20"><circle cx="10" cy="10" r="10"/><path d="M9 20v-7H6.500v-3H9V8q0-3.500 3.500-3.500h1.800v2.700h-1.400q-1.200 0-1.200 1.200V10h2.600l-.5 3h-2.100v7z" fill="#fff"/></svg></a>
                <a href="#" aria-label="인스타그램" class="w-[37px] h-[37px] rounded-full bg-white flex items-center justify-center"><svg class="w-5 h-5" viewBox="0 0 20 20" fill="none" stroke="#000" stroke-width="2"><rect x="1" y="1" width="18" height="18" rx="5"/><circle cx="10" cy="10" r="4.300"/><circle cx="15" cy="5" r=".6"/></svg></a>
                <a href="#" aria-label="블로그" class="w-[37px] h-[37px] rounded-full bg-white border border-[#e5e5e5] flex items-center justify-center"><svg class="w-5 h-5" viewBox="0 0 20 20"><path d="M2 2h16q2 0 2 2v9q0 2-2 2h-6l-2 4-2-4H2q-2 0-2-2V4q0-2 2-2z"/><text x="10" y="11" text-anchor="middle" fill="#fff" class="text-[8px] font-black">blog</text></svg></a>
              </div>
            </div>
          </div>
          <div class="mt-[39px] pt-[15px] border-t border-[#d8dadc] flex justify-between">
            <div class="flex gap-5"><a href="#" class="font-bold text-[#063a74]">개인정보처리방침</a><a href="#">영상정보기기운영규정</a><a href="#">저작권정책</a></div>
            <p class="text-[14px] text-[#555]">© Gyeonggido Office of Education, All Right Reserved.</p>
          </div>
        </div>
      </div>
    </footer>

    <!-- Floating buttons -->
    <div class="absolute bottom-5 right-[19px] flex flex-col items-center gap-[5px]">
      <a href="#" class="w-[47px] h-[47px] rounded-full bg-[#483c98] text-white text-[12px] leading-4 flex flex-col items-center justify-center"><svg class="w-[14px] h-3" viewBox="0 0 12 12"><path d="M1 9l5-6 5 6" fill="none" stroke="#fff" stroke-width="1.200"/></svg>TOP</a>
      <button type="button" class="relative overflow-hidden w-[66px] h-[85px] rounded-[14px] bg-[#3f404e] text-white text-[12px] leading-4">
        <span class="absolute left-0 -top-[18px] w-[66px] h-[66px] rounded-full bg-[#53545f]"></span>
        <span class="relative flex flex-col items-center gap-[22px] pt-1">
          <svg class="w-[22px] h-[22px]" viewBox="0 0 22 22" fill="#fff"><path d="M9 3a8.500 8.500 0 1 0 11 11Q9 17 9 3z"/><path d="M14 1l1 2.500L17.500 4.500 15 5.500 14 8l-1-2.500L10.500 4.500 13 3.500zM19 6l.8 1.800 1.700.7-1.700.8L19 11l-.8-1.700-1.700-.8 1.700-.7z"/></svg>
          다크 모드
        </span>
      </button>
    </div>
  </body>
</html>
